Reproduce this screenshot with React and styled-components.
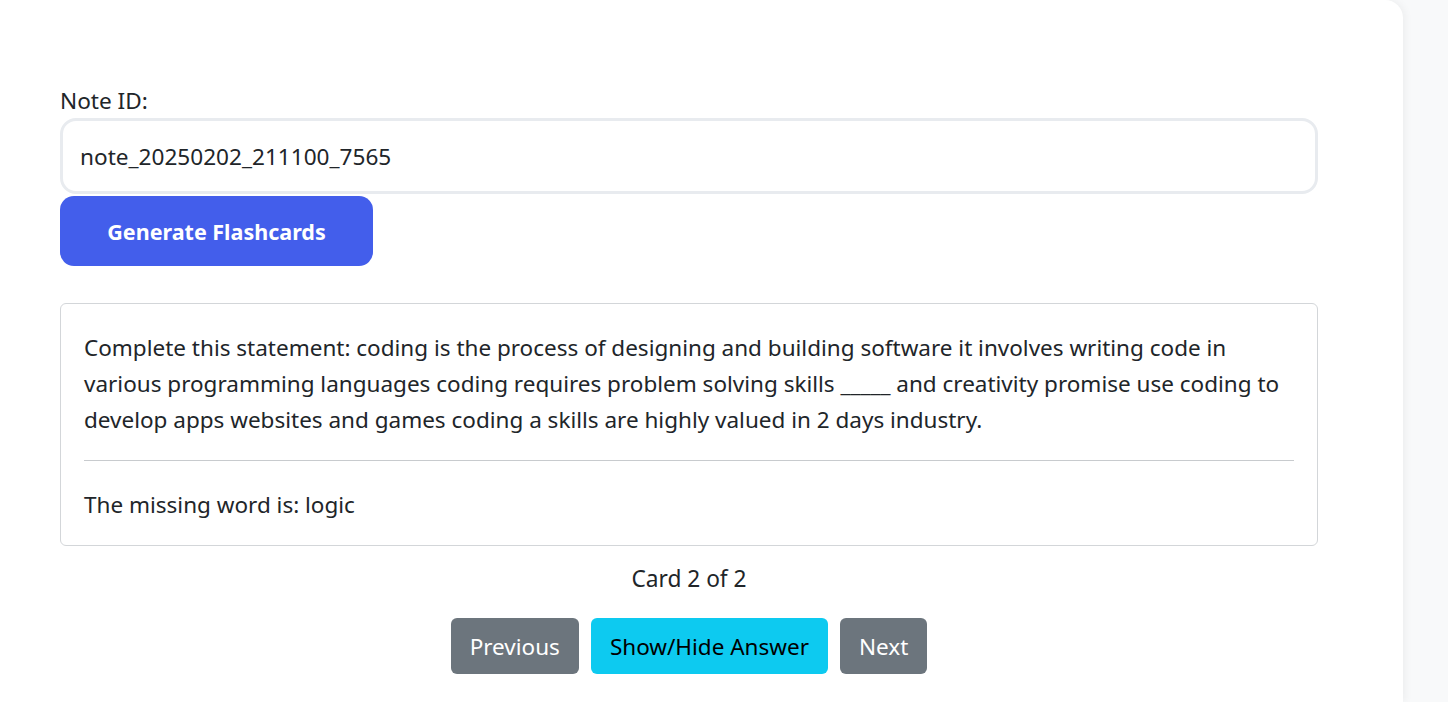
import React, { useState } from "react";
import styled, { createGlobalStyle } from "styled-components";

const GlobalStyle = createGlobalStyle`
  html, body {
    margin: 0;
    padding: 0;
    background: #f8f9fa;
    font-family: "Noto Sans", "Open Sans", sans-serif;
    color: #212529;
  }
  * { box-sizing: border-box; }
`;

const Page = styled.div`
  display: flex;
  height: 702px;
  overflow: hidden;
`;

const Panel = styled.main`
  width: 1403px;
  height: 100%;
  background: #fff;
  border-top-right-radius: 18px;
  box-shadow: 2px 0 8px rgba(0, 0, 0, 0.05);
  padding: 86px 85px 0 60px;
`;

const Label = styled.label`
  display: block;
  font-size: 22.6px;
  line-height: 30px;
  margin-bottom: 2px;
`;

const Input = styled.input`
  display: block;
  width: 100%;
  height: 76px;
  border: 3px solid #e8ebef;
  border-radius: 16px;
  padding: 0 17px;
  font: inherit;
  font-size: 22.6px;
  color: #212529;
  outline: none;
`;

const PrimaryButton = styled.button`
  margin-top: 2px;
  width: 313px;
  height: 70px;
  border: none;
  border-radius: 14px;
  background: #435eeb;
  color: #fff;
  font: inherit;
  font-size: 21.5px;
  font-weight: 700;
`;

const Card = styled.section`
  margin-top: 37px;
  border: 1px solid #d3d6d9;
  border-radius: 6px;
  padding: 26px 23px 22px;
  font-size: 22.5px;
  line-height: 36px;
`;

const Text = styled.p`
  margin: 0;
`;

const Divider = styled.hr`
  margin: 22px 0 26px;
  border: none;
  border-top: 1px solid #c8cbce;
`;

const Counter = styled.div`
  text-align: center;
  font-size: 22.7px;
  line-height: 30px;
  margin-top: 18px;
`;

const Controls = styled.div`
  display: flex;
  justify-content: center;
  gap: 12px;
  margin-top: 24px;
`;

const NavButton = styled.button`
  height: 56px;
  padding: 0 19px;
  border: none;
  border-radius: 6px;
  background: ${(p) => (p.$info ? "#0dcaf0" : "#6c757d")};
  color: ${(p) => (p.$info ? "#000" : "#fff")};
  font: inherit;
  font-size: 22.5px;
`;

export default function App() {
  const [showAnswer, setShowAnswer] = useState(true);
  return (
    <>
      <GlobalStyle />
      <Page>
        <Panel>
          <Label htmlFor="note">Note ID:</Label>
          <Input id="note" defaultValue="note_20250202_211100_7565" />
          <PrimaryButton>Generate Flashcards</PrimaryButton>
          <Card>
            <Text>
              Complete this statement: coding is the process of designing and
              building software it involves writing code in various programming
              languages coding requires problem solving skills _____ and
              creativity promise use coding to develop apps websites and games
              coding a skills are highly valued in 2 days industry.
            </Text>
            {showAnswer && (
              <>
                <Divider />
                <Text>The missing word is: logic</Text>
              </>
            )}
          </Card>
          <Counter>Card 2 of 2</Counter>
          <Controls>
            <NavButton>Previous</NavButton>
            <NavButton $info onClick={() => setShowAnswer(!showAnswer)}>
              Show/Hide Answer
            </NavButton>
            <NavButton>Next</NavButton>
          </Controls>
        </Panel>
      </Page>
    </>
  );
}
